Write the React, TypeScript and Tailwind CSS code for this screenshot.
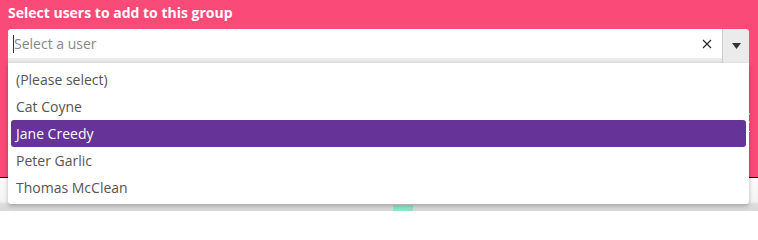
import { useState } from "react";

const users = ["(Please select)", "Cat Coyne", "Jane Creedy", "Peter Garlic", "Thomas McClean"];

const App = () => {
  const [active] = useState<number>(2);

  return (
    <div className="relative w-[758px] h-[211px] overflow-hidden bg-[#f7f7f7] font-['Open_Sans',sans-serif]">
      <div className="h-[178px] bg-[#f94a78] border-b border-black px-2 pt-[3px]">
        <div className="text-white font-bold text-[14px] leading-[20px]">Select users to add to this group</div>
        <div className="relative mt-[6px] flex h-[34px] w-[741px]">
          <div className="flex flex-1 items-center rounded-tl-[3px] bg-[linear-gradient(to_bottom,#fff_0%,#fff_84%,#ececec_86%,#e2e2e2_100%)] pl-[5px] pb-[5px]">
            <span className="w-px h-[18px] bg-[#333]"></span>
            <span className="text-[14px] text-[#888] leading-none">Select a user</span>
            <div className="ml-auto mr-[10px]">
              <svg width="10" height="10" viewBox="0 0 10 10">
                <path d="M1 1L9 9M9 1L1 9" stroke="#222" strokeWidth="1.1" />
              </svg>
            </div>
          </div>
          <div className="flex w-[27px] items-start justify-center rounded-tr-[3px] border-l border-[#ccc] bg-[#ebebeb] pt-[14px]">
            <svg width="9" height="6" viewBox="0 0 9 6">
              <path d="M0 0H9L4.5 6Z" fill="#333" />
            </svg>
          </div>
          <div className="absolute left-0 top-[34px] z-10 w-[741px] rounded-b-[3px] bg-white px-[3px] pt-[3px] pb-[3px] shadow-[0_2px_4px_rgba(0,0,0,0.25)]">
            {users.map((u, i) => (
              <div
                key={u}
                className={
                  i === active
                    ? "h-[27px] rounded-[3px] bg-[#663399] px-[5px] text-[14px] leading-[27px] text-white"
                    : "h-[27px] px-[5px] text-[14px] leading-[27px] text-[#555]"
                }
              >
                {u}
              </div>
            ))}
          </div>
        </div>
        <div className="mt-[45px] flex justify-end">
          <div className="w-[8px] overflow-hidden border-b border-white pb-[3px] text-[14px] leading-[20px] text-white whitespace-nowrap">
            Create
          </div>
        </div>
      </div>
      <div className="h-[33px] bg-[linear-gradient(to_bottom,#fafafa_0%,#f4f4f4_70%,#dcdcdc_80%,#d8d8d8_100%)] flex justify-center">
        <div className="mt-[27px] ml-[48px] h-[6px] w-[20px] bg-[#8fe6c4]"></div>
      </div>
    </div>
  );
};

export default App;
